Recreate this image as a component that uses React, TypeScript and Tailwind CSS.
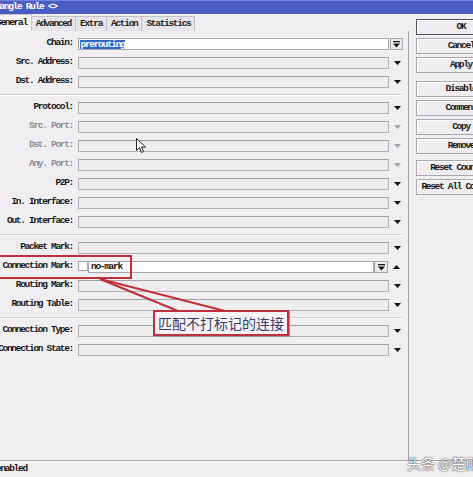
import React from "react";

type Row =
  | { kind: "sep" }
  | { kind: "field"; label: string; dim?: boolean; special?: "chain" | "mark" };

const rows: Row[] = [
  { kind: "field", label: "Chain:", special: "chain" },
  { kind: "field", label: "Src. Address:" },
  { kind: "field", label: "Dst. Address:" },
  { kind: "sep" },
  { kind: "field", label: "Protocol:" },
  { kind: "field", label: "Src. Port:", dim: true },
  { kind: "field", label: "Dst. Port:", dim: true },
  { kind: "field", label: "Any. Port:", dim: true },
  { kind: "field", label: "P2P:" },
  { kind: "field", label: "In. Interface:" },
  { kind: "field", label: "Out. Interface:" },
  { kind: "sep" },
  { kind: "field", label: "Packet Mark:" },
  { kind: "field", label: "Connection Mark:", special: "mark" },
  { kind: "field", label: "Routing Mark:" },
  { kind: "field", label: "Routing Table:" },
  { kind: "sep" },
  { kind: "field", label: "Connection Type:" },
  { kind: "field", label: "Connection State:" },
];

const buttonGroups = [
  ["OK", "Cancel", "Apply"],
  ["Disable", "Comment", "Copy", "Remove"],
  ["Reset Counters", "Reset All Counters"],
];

function Down({ dim }: { dim?: boolean }) {
  return (
    <svg width="7" height="4" viewBox="0 0 7 4" className="block">
      <polygon points="0,0 7,0 3.5,4" fill={dim ? "#a6a4a8" : "#111"} />
    </svg>
  );
}

function Up() {
  return (
    <svg width="7" height="4" viewBox="0 0 7 4" className="block">
      <polygon points="0,4 7,4 3.5,0" fill="#111" />
    </svg>
  );
}

function ListButton({ w }: { w: string }) {
  return (
    <div className={`${w} h-[12px] border border-[#a8a6aa] bg-[#ebe9ed] flex items-center justify-center`}>
      <svg width="7" height="7" viewBox="0 0 7 7" className="block">
        <rect x="0" y="0" width="7" height="1.2" fill="#111" />
        <polygon points="0,2.5 7,2.5 3.5,6.5" fill="#111" />
      </svg>
    </div>
  );
}

function FormRow({ row }: { row: Extract<Row, { kind: "field" }> }) {
  return (
    <div className="flex h-[19px] items-start">
      <div className="w-[74px] h-[19px] flex justify-end items-center pr-[1px]">
        <span className={`shrink-0 whitespace-nowrap ${row.dim ? "text-[#8e8c90]" : "text-[#161616]"}`}>
          {row.label}
        </span>
      </div>
      <div className="w-[4px]" />
      {row.special === "mark" ? (
        <>
          <div className="mt-[4px] w-[10px] h-[10px] border border-[#a8a6aa] bg-white" />
          <div className="mt-[4px] w-[286px] h-[12px] border border-[#a8a6aa] bg-white flex items-center pl-[2px] text-[#111]">
            no-mark
          </div>
          <div className="mt-[4px]">
            <ListButton w="w-[14px]" />
          </div>
          <div className="mt-[8px] ml-[5px]">
            <Up />
          </div>
        </>
      ) : row.special === "chain" ? (
        <>
          <div className="mt-[4px] w-[311px] h-[12px] border border-[#a8a6aa] bg-white flex items-center pl-[1px]">
            <span className="bg-[#3169c6] text-white leading-[9px] px-[0.5px]">prerouting</span>
          </div>
          <div className="mt-[4px] ml-[1px]">
            <ListButton w="w-[13px]" />
          </div>
        </>
      ) : (
        <>
          <div className="mt-[4px] w-[311px] h-[12px] border border-[#b3b1b5] border-t-[#a3a1a5] bg-[#eeecef]" />
          <div className="mt-[8px] ml-[5px]">
            <Down dim={row.dim} />
          </div>
        </>
      )}
    </div>
  );
}

export default function App() {
  return (
    <div className="relative w-[473px] h-[477px] overflow-hidden bg-[#f0eef1] flex flex-col font-['Liberation_Mono',monospace] text-[9.5px] font-bold tracking-[-1.3px]">
      {/* title bar */}
      <div className="h-[14px] shrink-0 bg-[#4b5cc3] border-t border-[#7384dc] flex items-center text-white whitespace-nowrap">
        <span className="ml-[-5px]">Mangle Rule &lt;&gt;</span>
      </div>

      <div className="flex flex-1 min-h-0">
        {/* left panel */}
        <div className="w-[409px] shrink-0 flex flex-col">
          <div className="h-[17px] flex items-end ml-[-9px] whitespace-nowrap">
            <div className="h-[17px] px-[4px] border-x border-t border-[#c6c4c8] border-l-white bg-[#f7f6f8] flex items-center text-[#111]">
              General
            </div>
            {["Advanced", "Extra", "Action", "Statistics"].map((t) => (
              <div
                key={t}
                className="h-[15px] px-[4px] border-r border-t border-[#c3c1c5] bg-[#e7e5e9] flex items-center text-[#222]"
              >
                {t}
              </div>
            ))}
          </div>
          <div className="flex-1 border-r border-[#a6a4a8] pt-[3px]">
            {rows.map((row, i) =>
              row.kind === "sep" ? (
                <div key={i} className="h-[7px] flex items-center pr-[6px]">
                  <div className="w-full h-[2px] border-t border-[#d3d1d5] border-b border-b-white" />
                </div>
              ) : (
                <FormRow key={i} row={row} />
              )
            )}
          </div>
        </div>

        {/* buttons */}
        <div className="flex-1 pl-[7px] pt-[5px] flex flex-col gap-[8px]">
          {buttonGroups.map((g, gi) => (
            <div key={gi} className={`flex flex-col gap-[3px] ${gi === 2 ? "mt-[-2px]" : ""}`}>
              {g.map((b) => (
                <div
                  key={b}
                  className={`w-[90px] h-[16px] shrink-0 flex items-center justify-center whitespace-nowrap bg-[#efedf0] border text-[#161616] shadow-[inset_1px_1px_0_#ffffff] ${
                    b === "OK" ? "border-[#55535a]" : "border-[#a9a7ab]"
                  }`}
                >
                  {b}
                </div>
              ))}
            </div>
          ))}
        </div>
      </div>

      {/* status bar */}
      <div className="h-[17px] shrink-0 border-t border-[#a5a3a7] flex items-center">
        <div className="w-full h-full border-t border-white flex items-center">
          <span className="ml-[-4px] text-[#161616]">enabled</span>
        </div>
      </div>

      {/* annotation: red frame around label */}
      <div className="absolute left-[-2px] top-[255px] w-[134px] h-[24px] border-2 border-[#c0303c]" />

      {/* annotation: callout tail */}
      <svg className="absolute left-0 top-0 pointer-events-none" width="473" height="477">
        <line x1="100" y1="279" x2="178" y2="311" stroke="#c0303c" strokeWidth="2" />
        <line x1="100" y1="279" x2="225" y2="311" stroke="#c0303c" strokeWidth="2" />
      </svg>

      {/* annotation: callout box */}
      <div className="absolute left-[153px] top-[310px] w-[136px] h-[26px] border-2 border-[#c0303c] bg-[#f5f2f6] shadow-[1px_1px_0_#9a989c] flex items-center justify-center font-['Noto_Sans_CJK_SC',sans-serif] font-normal tracking-normal text-[14px] text-[#373c6c]">
        匹配不打标记的连接
      </div>

      {/* mouse cursor */}
      <svg className="absolute left-[136px] top-[138px]" width="10" height="16" viewBox="0 0 10 16">
        <path d="M0.5 0.5 L0.5 12.5 L3.5 9.5 L5.5 14.5 L7.5 13.5 L5.5 9 L9.5 9 Z" fill="#fff" stroke="#222" strokeWidth="1" />
      </svg>

      {/* watermark */}
      <div className="absolute left-[407px] top-[453px] whitespace-nowrap font-['Noto_Sans_CJK_SC',sans-serif] font-normal tracking-normal text-[14px] text-white [text-shadow:0_0_1px_#222,0_0_2px_#555]">
        头条 @楚顾
      </div>
    </div>
  );
}
